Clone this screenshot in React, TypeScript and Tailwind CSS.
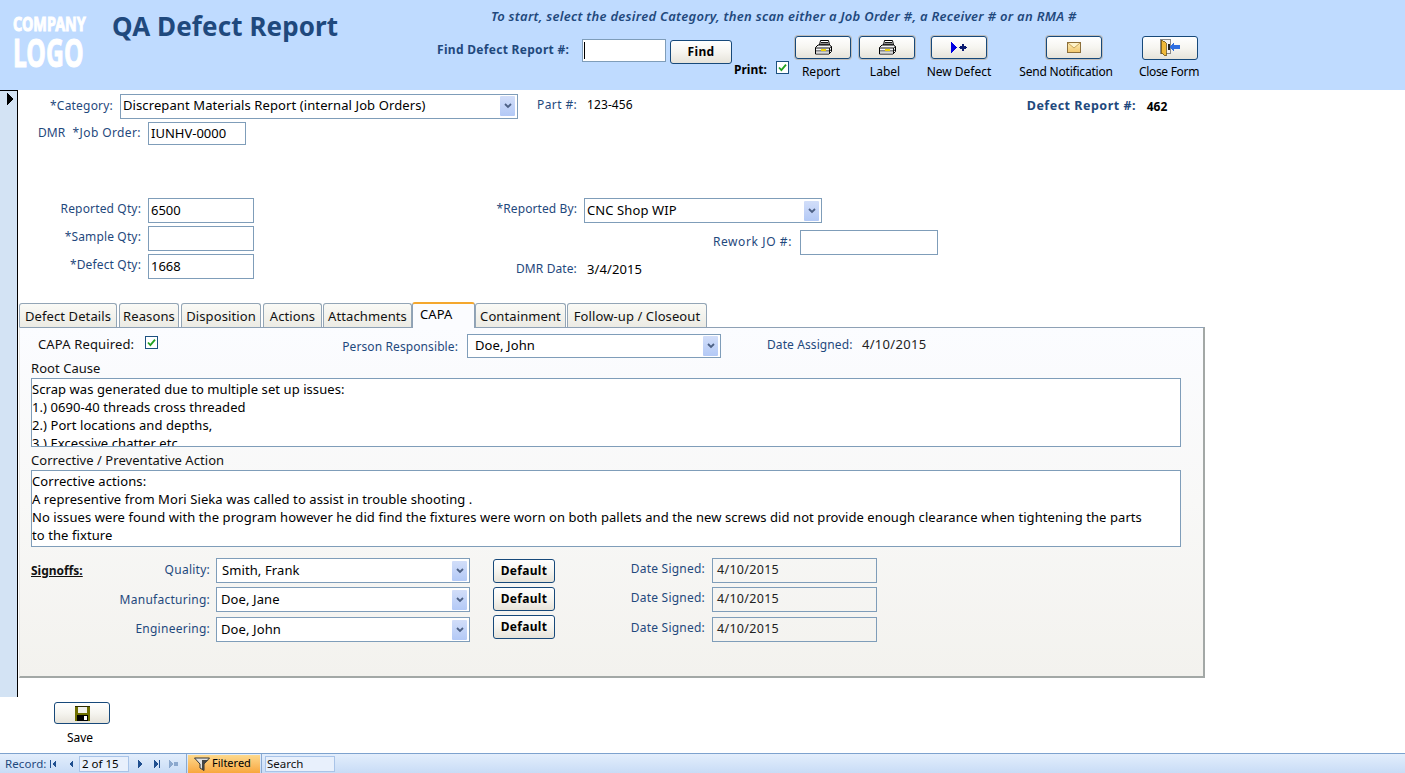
import React from "react";

const FONT = "[font-family:'Noto_Sans','DejaVu_Sans',sans-serif]";

function Printer() {
  return (
    <svg width="18" height="15" viewBox="0 0 18 15">
      <path d="M6.5.5h8l1 4.5h-10z" fill="#fff" stroke="#000" />
      <path d="M7 2.5h7M6.5 4h8" stroke="#000" strokeWidth="0.9" />
      <path d="M1.5 7.5L4 5h11.5l2 1.5v5l-2.5 2.5H1.5z" fill="#f4f4f4" stroke="#000" />
      <path d="M1.5 8h14M1.5 11h14M15.5 8l2-1.5M15.5 11l2-1.5M15.5 8v6" stroke="#000" strokeWidth="0.9" fill="none" />
      <rect x="2" y="11.5" width="13" height="2" fill="#d8d8d8" />
      <rect x="7" y="9" width="5" height="2" fill="#f2d400" />
    </svg>
  );
}

function NewRecord() {
  return (
    <svg width="16" height="11" viewBox="0 0 16 11" shapeRendering="crispEdges">
      <path d="M0 0h1v1h1v1h1v1h1v1h1v1h1v1H5v1H4v1H3v1H2v1H1v1H0z" fill="#0000e0" />
      <path d="M11 2h2v2h2v1h1v1h-1v1h-2v2h-2V7H9V6H8V5h1V4h2z" fill="#0a1a70" />
    </svg>
  );
}

function Envelope() {
  return (
    <svg width="14" height="11" viewBox="0 0 14 11">
      <defs>
        <linearGradient id="env" x1="0" y1="0" x2="0" y2="1">
          <stop offset="0" stopColor="#fdeeb8" />
          <stop offset="1" stopColor="#f1c66c" />
        </linearGradient>
      </defs>
      <rect x="0.5" y="0.5" width="13" height="10" fill="url(#env)" stroke="#8c6f3a" />
      <path d="M1 1l6 5 6-5" fill="#fdf2c8" stroke="#c9a45a" />
    </svg>
  );
}

function DoorExit() {
  return (
    <svg width="20" height="18" viewBox="0 0 20 18" shapeRendering="crispEdges">
      <rect x="0.5" y="0.5" width="10" height="14" fill="#f2f2f2" stroke="#8a8a8a" />
      <path d="M1 1l5 2.5V17l-5-3z" fill="#efb93a" stroke="#6e5518" strokeWidth="0.8" />
      <rect x="8" y="5" width="2" height="6" fill="#222" />
      <path d="M10 8l4-4.5V6h6v4h-6v2.5z" fill="#2f6fe0" />
    </svg>
  );
}

function Floppy() {
  return (
    <svg width="15" height="15" viewBox="0 0 15 15" shapeRendering="crispEdges">
      <rect width="15" height="15" fill="#6f6f00" />
      <rect x="3" y="0" width="9" height="7" fill="#f0f0ea" />
      <rect x="0" y="0" width="15" height="1" fill="#2a2a00" />
      <rect x="2" y="9" width="11" height="6" fill="#000" />
      <rect x="9" y="10" width="3" height="4" fill="#fff" />
    </svg>
  );
}

function Funnel() {
  return (
    <svg width="16" height="14" viewBox="0 0 16 14">
      <path d="M0.5 1h15L10 7v6.5L6 11V7z" fill="#e2e2e2" stroke="#333" strokeWidth="1" />
      <path d="M8 3h6.5L10 7v6.5L8 12z" fill="#444" />
    </svg>
  );
}

function Check({ className = "" }: { className?: string }) {
  return (
    <span className={`flex h-[13px] w-[13px] shrink-0 items-center justify-center border border-[#1c5180] bg-white ${className}`}>
      <svg width="9" height="9" viewBox="0 0 9 9">
        <path d="M1 4.5l2.4 2.6L8 1.6" fill="none" stroke="#21a121" strokeWidth="1.8" />
      </svg>
    </span>
  );
}

function Combo({ text, className = "", pad = 3 }: { text: string; className?: string; pad?: number }) {
  return (
    <div className={`flex items-center border border-[#7f9db9] bg-white pr-[2px] ${className}`}>
      <span className="flex-1 truncate text-[13px] tracking-[0.1px] text-black" style={{ paddingLeft: pad - 1 }}>
        {text}
      </span>
      <span className="flex h-[20px] w-[15px] items-center justify-center rounded-[1px] bg-gradient-to-b from-[#d2def9] to-[#b3c9f6]">
        <svg width="8" height="6" viewBox="0 0 8 6">
          <path d="M1 1l3 3 3-3" fill="none" stroke="#4d6185" strokeWidth="1.8" />
        </svg>
      </span>
    </div>
  );
}

function Btn({ children, className = "", style }: { children?: React.ReactNode; className?: string; style?: React.CSSProperties }) {
  return (
    <div
      className={`flex items-center justify-center rounded-[3px] border-[1.5px] border-[#17497a] bg-gradient-to-b from-white via-[#f6f5f0] to-[#e6e3da] text-black ${className}`}
      style={style}
    >
      {children}
    </div>
  );
}

function Lbl({ w, children, className = "" }: { w: number | string; children: React.ReactNode; className?: string }) {
  return (
    <span className={`shrink-0 whitespace-nowrap text-right text-[12px] leading-[16px] text-[#1f497d] ${className}`} style={{ width: w }}>
      {children}
    </span>
  );
}

function Tab({ label, w, active = false, ml = 0 }: { label: string; w: number; active?: boolean; ml?: number }) {
  if (active) {
    return (
      <div
        className="relative z-10 -mb-px flex h-[26px] items-start rounded-t-[3px] border-x border-[#8ea1b5] border-t-2 border-t-[#f4a72e] bg-[#fbfcff] pl-[7px] pt-[1px] text-[13px] tracking-[0.1px] text-black"
        style={{ width: w, marginLeft: ml }}
      >
        {label}
      </div>
    );
  }
  return (
    <div
      className="flex h-[24px] items-center justify-center whitespace-nowrap rounded-t-[3px] border-x border-t border-[#93a5b6] bg-gradient-to-b from-[#fafaf6] to-[#ecebe4] pt-[3px] text-[13px] tracking-[0.1px] text-[#111]"
      style={{ width: w, marginLeft: ml }}
    >
      {label}
    </div>
  );
}

function SignRow({ label, name, mt, btnMt, pad, labelTop }: { label: string; name: string; mt: number; btnMt: number; pad: number; labelTop: number }) {
  return (
    <div className="flex h-[25px] items-start" style={{ marginTop: mt }}>
      <span style={{ marginTop: labelTop }}>
        <Lbl w={190} className="block tracking-[0.25px]">{label}</Lbl>
      </span>
      <Combo text={name} pad={pad} className="ml-[6px] h-[25px] w-[254px]" />
      <Btn className="ml-[23px] h-[24px] w-[62px] text-[12px] font-bold tracking-[0.3px]" style={{ marginTop: btnMt }}>
        Default
      </Btn>
      <Lbl w={76} className="ml-[74px] mt-[3px] tracking-[0.22px]">Date Signed:</Lbl>
      <div className="ml-[7px] flex h-[25px] w-[165px] items-center border border-[#7f9db9] pb-[1px] pl-[4px] text-[12.5px] tracking-[0.3px] text-[#222] [font-family:'Liberation_Sans',sans-serif]">
        4/10/2015
      </div>
    </div>
  );
}

function NavArrow({ d }: { d: string }) {
  return (
    <svg width="10" height="10" viewBox="0 0 10 10" shapeRendering="crispEdges">
      <path d={d} fill="#1f4f8f" />
    </svg>
  );
}

function HeadBtn({ label, icon, ml, shift = 0, halo = true, h = 23, track = 0 }: { label: string; icon: React.ReactNode; ml: number; shift?: number; halo?: boolean; h?: number; track?: number }) {
  return (
    <div className="mt-[12px] flex w-[56px] shrink-0 flex-col items-center" style={{ marginLeft: ml }}>
      <Btn className={`w-[56px] shrink-0 ${halo ? "shadow-[0_0_0_1px_#bdbdbd]" : ""}`} style={{ height: h }}>
        {icon}
      </Btn>
      <span className="whitespace-nowrap text-[12px] leading-[16px] text-black" style={{ marginTop: 28 - h, marginRight: shift, letterSpacing: track }}>
        {label}
      </span>
    </div>
  );
}

export default function App() {
  return (
    <div className={`flex h-[773px] w-[1405px] flex-col overflow-hidden bg-white ${FONT}`}>
      {/* Header */}
      <header className="flex h-[90px] shrink-0 items-start bg-[#bfdbff]">
        <div className="ml-[13px] mt-[15px] w-[72px] select-none font-bold text-white [font-family:'Liberation_Sans',sans-serif] [-webkit-text-stroke:1px_white]">
          <div className="h-[18px] origin-left scale-x-[0.72] whitespace-nowrap text-[20px] leading-[18px]">COMPANY</div>
          <div className="mt-[4px] h-[30px] origin-left scale-x-[0.62] whitespace-nowrap text-[40px] leading-[30px]">LOGO</div>
        </div>
        <h1 className="ml-[27px] mt-[8px] w-[325px] text-[26px] font-bold leading-[36px] tracking-[0.1px] text-[#1f497d]">QA Defect Report</h1>
        <div className="flex w-[770px] flex-col">
          <div className="ml-[54px] mt-[8px] h-[16px] whitespace-nowrap text-[13px] font-semibold italic leading-[16px] tracking-[0.28px] text-[#1f497d]">
            To start, select the desired Category, then scan either a Job Order #, a Receiver # or an RMA #
          </div>
          <div className="flex items-start">
            <span className="mt-[18px] w-[145px] shrink-0 whitespace-nowrap text-[12px] font-bold leading-[16px] tracking-[0.3px] text-[#1f497d]">Find Defect Report #:</span>
            <div className="mt-[15px] flex h-[23px] w-[84px] shrink-0 items-center border border-[#7f9db9] bg-white pl-[1px]">
              <span className="h-[17px] w-px bg-black" />
            </div>
            <Btn className="ml-[4px] mt-[16px] h-[24px] w-[62px] shrink-0 text-[12px] font-bold tracking-[0.3px]">Find</Btn>
            <div className="ml-[2px] mt-[38px] flex w-[55px] shrink-0 items-start">
              <span className="w-[42px] text-[12px] font-bold leading-[16px] text-black">Print:</span>
              <Check className="-mt-[1px]" />
            </div>
            <HeadBtn label="Report" icon={<Printer />} ml={6} shift={4} />
            <HeadBtn label="Label" icon={<Printer />} ml={8} shift={4} />
            <HeadBtn label="New Defect" icon={<NewRecord />} ml={16} />
            <HeadBtn label="Send Notification" icon={<Envelope />} ml={59} shift={16} track={-0.2} />
            <HeadBtn label="Close Form" icon={<DoorExit />} ml={40} shift={2} halo={false} h={24} track={-0.3} />
          </div>
        </div>
      </header>

      {/* Body */}
      <div className="flex h-[607px] shrink-0">
        <div className="h-full w-[18px] shrink-0 border-r border-t border-black bg-[#d3e3f4] pl-[7px] pt-[2px]">
          <svg width="7" height="12" viewBox="0 0 7 12" shapeRendering="crispEdges">
            <path d="M0 0l7 6-7 6z" fill="#000" />
          </svg>
        </div>
        <main className="min-w-0 flex-1">
          {/* Top rows */}
          <div className="mt-[4px] flex h-[25px] items-center">
            <Lbl w={95} className="relative -top-[1px] tracking-[0.2px]">*Category:</Lbl>
            <Combo text="Discrepant Materials Report (internal Job Orders)" pad={3} className="ml-[7px] h-[25px] w-[398px] pb-[1px]" />
            <span className="relative -top-[2px] ml-[19px] w-[50px] text-[12px] tracking-[0.4px] text-[#1f497d]">Part #:</span>
            <span className="relative -top-[2px] text-[12px] tracking-[0.1px] text-black">123-456</span>
            <span className="ml-[394px] w-[120px] whitespace-nowrap text-[12.5px] font-bold tracking-[0.5px] text-[#1f497d]">Defect Report #:</span>
            <span className="text-[12px] font-bold text-black">462</span>
          </div>
          <div className="mt-[3px] flex h-[23px] items-center">
            <span className="relative -top-[1px] ml-[20px] w-[26px] text-[12px] tracking-[0.1px] text-[#1f497d]">DMR</span>
            <Lbl w={77} className="relative -top-[1px] tracking-[0.4px]">*Job Order:</Lbl>
            <div className="ml-[7px] flex h-[23px] w-[98px] items-center border border-[#7f9db9] pl-[2px] text-[13px] text-black">IUNHV-0000</div>
          </div>

          <div className="mt-[53px] flex h-[25px] items-center">
            <Lbl w={123} className="relative -top-[2px] tracking-[0.15px]">Reported Qty:</Lbl>
            <div className="ml-[7px] flex h-[25px] w-[106px] items-center border border-[#7f9db9] pl-[2px] text-[13px] text-black">6500</div>
            <Lbl w={323} className="relative -top-[2px] tracking-[0.1px]">*Reported By:</Lbl>
            <Combo text="CNC Shop WIP" pad={3} className="ml-[7px] h-[25px] w-[238px]" />
          </div>
          <div className="mt-[3px] flex h-[25px] items-center">
            <Lbl w={123} className="relative -top-[2px] tracking-[0.15px]">*Sample Qty:</Lbl>
            <div className="ml-[7px] h-[25px] w-[106px] border border-[#7f9db9]" />
            <Lbl w={538} className="relative top-[3px] tracking-[0.6px]">Rework JO #:</Lbl>
            <div className="relative top-[4px] ml-[8px] h-[25px] w-[138px] border border-[#7f9db9]" />
          </div>
          <div className="mt-[3px] flex h-[25px] items-center">
            <Lbl w={123} className="relative -top-[2px] tracking-[0.15px]">*Defect Qty:</Lbl>
            <div className="ml-[7px] flex h-[25px] w-[106px] items-center border border-[#7f9db9] pl-[2px] text-[13px] text-black">1668</div>
            <span className="relative top-[2px] ml-[262px] w-[71px] text-[12px] tracking-[0.1px] text-[#1f497d]">DMR Date:</span>
            <span className="relative top-[3px] text-[13px] tracking-[0.1px] text-black">3/4/2015</span>
          </div>

          {/* Tabs */}
          <div className="ml-[1px] mt-[24px] flex h-[24px] items-end">
            <Tab label="Defect Details" w={98} />
            <Tab label="Reasons" w={60} ml={2} />
            <Tab label="Disposition" w={80} ml={2} />
            <Tab label="Actions" w={59} ml={2} />
            <Tab label="Attachments" w={89} ml={1} />
            <Tab label="CAPA" w={63} active />
            <Tab label="Containment" w={91} />
            <Tab label="Follow-up / Closeout" w={140} ml={1} />
          </div>

          {/* Panel */}
          <section className="ml-[1px] h-[351px] w-[1186px] border-r-2 border-b-2 border-t border-l border-r-[#a3a8a6] border-b-[#a3a8a6] border-t-[#8ea1b5] border-l-[#e8e8e4] bg-gradient-to-b from-[#fbfcff] via-[#f8f8f7] to-[#f3f2ee]">
            <div className="mt-[6px] flex h-[25px] items-start">
              <span className="ml-[18px] mt-[1px] w-[107px] text-[13px] tracking-[0.15px] text-[#111]">CAPA Required:</span>
              <Check className="mt-[2px]" />
              <Lbl w={125} className="ml-[175px] mt-[5px] tracking-[0.1px]">Person Responsible:</Lbl>
              <Combo text="Doe, John" pad={8} className="ml-[9px] h-[24px] w-[254px]" />
              <span className="ml-[46px] mt-[2px] w-[95px] whitespace-nowrap text-[12px] tracking-[0.1px] text-[#1f497d]">Date Assigned:</span>
              <span className="mt-[1px] text-[13px] tracking-[0.3px] text-[#222] [font-family:'Liberation_Sans',sans-serif]">4/10/2015</span>
            </div>
            <div className="ml-[11px] mt-[1px] h-[18px] text-[13px] leading-[17px] tracking-[0.05px] text-[#111]">Root Cause</div>
            <div className="ml-[11px] h-[69px] w-[1150px] overflow-hidden border border-[#7f9db9] bg-white pt-[1px] text-[13px] leading-[18px] tracking-[0.07px] text-black">
              <div>Scrap was generated due to multiple set up issues:</div>
              <div>1.) 0690-40 threads cross threaded</div>
              <div>2.) Port locations and depths,</div>
              <div>3.) Excessive chatter etc</div>
            </div>
            <div className="ml-[11px] mt-[4px] h-[19px] text-[13px] leading-[18px] tracking-[0.05px] text-[#111]">Corrective / Preventative Action</div>
            <div className="ml-[11px] h-[77px] w-[1150px] overflow-hidden border border-[#7f9db9] bg-white pt-[1px] text-[13px] leading-[18px] tracking-[0.08px] text-black">
              <div>Corrective actions:</div>
              <div>A representive from Mori Sieka was called to assist in trouble shooting .</div>
              <div>No issues were found with the program however he did find the fixtures were worn on both pallets and the new screws did not provide enough clearance when tightening the parts</div>
              <div>to the fixture</div>
            </div>
            <div className="relative mt-[11px]">
              <span className="absolute left-[11px] top-[5px] text-[12px] font-bold leading-[16px] text-[#111] underline">Signoffs:</span>
              <SignRow label="Quality:" name="Smith, Frank" mt={0} btnMt={1} pad={6} labelTop={4} />
              <SignRow label="Manufacturing:" name="Doe, Jane" mt={4} btnMt={0} pad={5} labelTop={5} />
              <SignRow label="Engineering:" name="Doe, John" mt={5} btnMt={-2} pad={5} labelTop={4} />
            </div>
          </section>
        </main>
      </div>

      {/* Save */}
      <div className="h-[56px] shrink-0 pl-[54px] pt-[5px]">
        <Btn className="h-[22px] w-[56px]"><Floppy /></Btn>
        <div className="mt-[6px] w-[52px] text-center text-[12px] leading-[16px] text-black">Save</div>
      </div>

      {/* Status bar */}
      <footer className="flex h-[20px] shrink-0 items-center border-t border-[#7da2ce] bg-gradient-to-b from-[#e3eefc] to-[#c8dcf6] text-[11.5px] text-[#1f497d]">
        <span className="ml-[5px] w-[43px] shrink-0 tracking-[0.1px]">Record:</span>
        <NavArrow d="M2 1h1v8H2zM8 1v8L4 5z" />
        <span className="ml-[8px] flex"><NavArrow d="M7 1v8L3 5z" /></span>
        <div className="ml-[3px] flex h-[16px] w-[50px] shrink-0 items-center border border-[#a9c4e8] bg-[#e8f0fc] pl-[2px] text-[11.5px] text-black">2 of 15</div>
        <span className="ml-[6px] flex"><NavArrow d="M3 1v8l4-4z" /></span>
        <span className="ml-[7px] flex"><NavArrow d="M2 1v8l4-4zM7 1h1v8H7z" /></span>
        <span className="ml-[7px] flex opacity-40"><NavArrow d="M0 1v8l4-4zM5 3h4v4H5z" /></span>
        <span className="ml-[7px] h-full w-px shrink-0 bg-[#8aa9d0]" />
        <div className="ml-[1px] flex h-[18px] w-[72px] shrink-0 items-center bg-gradient-to-b from-[#fdd98c] to-[#f8a73c] pl-[6px] text-black">
          <Funnel />
          <span className="ml-[2px] text-[11px]">Filtered</span>
        </div>
        <span className="ml-[1px] h-full w-px shrink-0 bg-[#8aa9d0]" />
        <div className="ml-[3px] flex h-[16px] w-[70px] shrink-0 items-center border border-[#a9c4e8] bg-[#e8f0fc] pl-[1px] text-[11.5px] text-[#111]">Search</div>
      </footer>
    </div>
  );
}
